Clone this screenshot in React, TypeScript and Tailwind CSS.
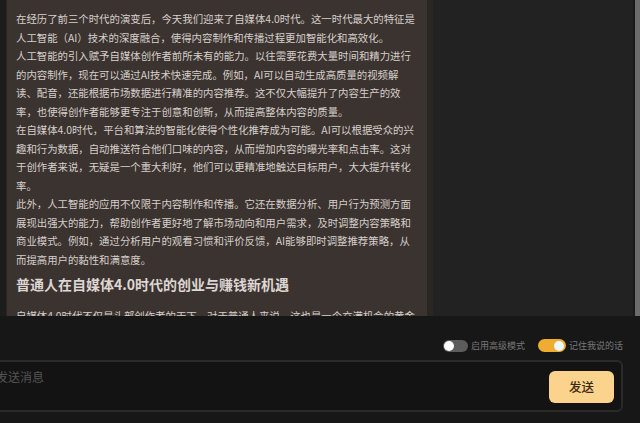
const cjk = "font-['Noto_Sans_CJK_SC','Noto_Sans',sans-serif]";

const para1 = [
  '在经历了前三个时代的演变后，今天我们迎来了自媒体4.0时代。这一时代最大的特征是',
  '人工智能（AI）技术的深度融合，使得内容制作和传播过程更加智能化和高效化。',
  '人工智能的引入赋予自媒体创作者前所未有的能力。以往需要花费大量时间和精力进行',
  '的内容制作，现在可以通过AI技术快速完成。例如，AI可以自动生成高质量的视频解',
  '读、配音，还能根据市场数据进行精准的内容推荐。这不仅大幅提升了内容生产的效',
  '率，也使得创作者能够更专注于创意和创新，从而提高整体内容的质量。',
  '在自媒体4.0时代，平台和算法的智能化使得个性化推荐成为可能。AI可以根据受众的兴',
  '趣和行为数据，自动推送符合他们口味的内容，从而增加内容的曝光率和点击率。这对',
  '于创作者来说，无疑是一个重大利好，他们可以更精准地触达目标用户，大大提升转化',
  '率。',
  '此外，人工智能的应用不仅限于内容制作和传播。它还在数据分析、用户行为预测方面',
  '展现出强大的能力，帮助创作者更好地了解市场动向和用户需求，及时调整内容策略和',
  '商业模式。例如，通过分析用户的观看习惯和评价反馈，AI能够即时调整推荐策略，从',
  '而提高用户的黏性和满意度。',
];

function Toggle({ on }: { on: boolean }) {
  return (
    <div
      className={
        on
          ? 'w-[28px] h-[13px] rounded-full bg-[#eeac30] flex items-center justify-end px-[2px]'
          : 'w-[25px] h-[12px] rounded-full bg-[#5c5c5c] flex items-center justify-start px-[1px]'
      }
    >
      <div className={on ? 'w-[10px] h-[10px] rounded-full bg-[#eef6ff]' : 'w-[10px] h-[10px] rounded-full bg-white'} />
    </div>
  );
}

export default function App() {
  return (
    <div className={`w-[640px] h-[423px] overflow-hidden bg-[#171717] flex flex-col ${cjk}`}>
      {/* Chat area */}
      <div className="h-[316px] flex shrink-0 overflow-hidden">
        <div className="w-[6px] bg-[#1c1c1c]" />
        <div className="w-[421px] bg-[#3b3330] border-l border-[#2a2422] pl-[9px] pt-[10px] text-[#d6cfca] overflow-hidden">
          <div className="text-[10.4px] leading-[18.5px]">
            {para1.map((line, i) => (
              <div key={i} className="whitespace-nowrap">
                {line}
              </div>
            ))}
          </div>
          <div className="mt-[4px] mb-[12px] text-[14px] leading-[22px] font-bold text-[#ddd6d2] whitespace-nowrap">
            普通人在自媒体4.0时代的创业与赚钱新机遇
          </div>
          <div className="text-[10.4px] leading-[18.5px] whitespace-nowrap">
            自媒体4.0时代不仅是头部创作者的天下，对于普通人来说，这也是一个充满机会的黄金
          </div>
        </div>
        <div className="w-[6px] bg-[#2a2624]" />
        <div className="flex-1 bg-[#222222]" />
        <div className="w-[2px] bg-[#1a1a1a]" />
        <div className="w-[5px] bg-[#6c6c6c]" />
      </div>

      {/* Bottom panel */}
      <div className="flex-1 flex flex-col">
        <div className="flex justify-end items-center gap-[3px] pr-[17px] mt-[23px] h-[13px]">
          <Toggle on={false} />
          <span className="text-[9px] leading-[12px] text-[#777] mr-[10px]">启用高级模式</span>
          <Toggle on={true} />
          <span className="text-[9px] leading-[12px] text-[#777]">记住我说的话</span>
        </div>
        <div className="mt-[8px] ml-[-16px] mr-[17px] h-[52px] rounded-[6px] border-2 border-[#2a2a2a] bg-[#131313] flex items-start justify-between pl-[10px] pr-[7px]">
          <span className="mt-[7px] text-[12px] leading-[16px] text-[#555]">发送消息</span>
          <button className="mt-[9px] w-[65px] h-[32px] rounded-[6px] bg-[#fcd38c] text-[#3a2a14] text-[12.5px] font-medium">
            发送
          </button>
        </div>
      </div>
    </div>
  );
}
